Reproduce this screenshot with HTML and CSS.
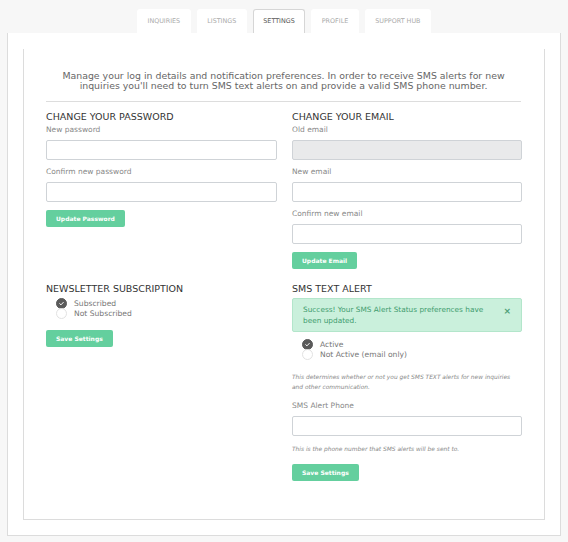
FILE: index.html
```html
<!DOCTYPE html>
<html>
<head>
<meta charset="utf-8">
<link rel="stylesheet" href="styles.css">
</head>
<body>
<nav class="tabs">
  <a class="tab">INQUIRIES</a>
  <a class="tab">LISTINGS</a>
  <a class="tab active">SETTINGS</a>
  <a class="tab">PROFILE</a>
  <a class="tab">SUPPORT HUB</a>
</nav>
<div class="outer">
  <div class="inner">
    <p class="intro">Manage your log in details and notification preferences. In order to receive SMS alerts for new inquiries you'll need to turn SMS text alerts on and provide a valid SMS phone number.</p>
    <div class="grid">
      <section class="col">
        <h3>CHANGE YOUR PASSWORD</h3>
        <label>New password</label>
        <input class="field" type="password">
        <label>Confirm new password</label>
        <input class="field" type="password">
        <button class="btn">Update Password</button>
      </section>
      <section class="col">
        <h3>CHANGE YOUR EMAIL</h3>
        <label>Old email</label>
        <input class="field disabled" type="text" disabled>
        <label>New email</label>
        <input class="field" type="text">
        <label>Confirm new email</label>
        <input class="field" type="text">
        <button class="btn">Update Email</button>
      </section>
      <section class="col">
        <h3 class="h-second">NEWSLETTER SUBSCRIPTION</h3>
        <div class="radios">
          <div class="radio"><span class="dot on"><svg viewBox="0 0 12 12" width="11" height="11"><path d="M3.6 6.2 L5.3 7.8 L8.4 4.5" fill="none" stroke="#fff" stroke-width="1.3" stroke-linecap="round" stroke-linejoin="round"/></svg></span>Subscribed</div>
          <div class="radio"><span class="dot"></span>Not Subscribed</div>
        </div>
        <button class="btn">Save Settings</button>
      </section>
      <section class="col">
        <h3 class="h-second">SMS TEXT ALERT</h3>
        <div class="alert"><span class="alert-text">Success! Your SMS Alert Status preferences have been updated.</span><span class="close">×</span></div>
        <div class="radios radios-sms">
          <div class="radio"><span class="dot on"><svg viewBox="0 0 12 12" width="11" height="11"><path d="M3.6 6.2 L5.3 7.8 L8.4 4.5" fill="none" stroke="#fff" stroke-width="1.3" stroke-linecap="round" stroke-linejoin="round"/></svg></span>Active</div>
          <div class="radio"><span class="dot"></span>Not Active (email only)</div>
        </div>
        <p class="hint">This determines whether or not you get SMS TEXT alerts for new inquiries and other communication.</p>
        <label>SMS Alert Phone</label>
        <input class="field" type="text">
        <p class="hint hint-2">This is the phone number that SMS alerts will be sent to.</p>
        <button class="btn">Save Settings</button>
      </section>
    </div>
  </div>
</div>
</body>
</html>
```

FILE: styles.css
```css
* { box-sizing: border-box; }
body {
  margin: 0;
  background: #f7f7f7;
  font-family: "DejaVu Sans", "Open Sans", sans-serif;
  color: #555;
}
.tabs {
  display: flex;
  justify-content: center;
  gap: 6px;
  padding-top: 9px;
  height: 33px;
}
.tab {
  background: #fff;
  border-radius: 3px 3px 0 0;
  height: 24px;
  padding: 0 10.5px;
  font-size: 6.4px;
  line-height: 24px;
  color: #aaa;
}
.tab.active {
  border: 1px solid #d6d6d6;
  border-bottom: none;
  color: #555;
  line-height: 22px;
  padding: 0 9.5px;
}
.outer {
  margin: 0 7px;
  background: #fff;
  border: 1px solid #dcdcdc;
  border-top: none;
  padding: 16px 15px 15px;
}
.inner {
  border: 1px solid #dcdcdc;
  border-top: none;
  padding: 22px 23px 38px 22px;
  height: 471px;
}
.intro {
  margin: 0;
  text-align: center;
  font-size: 9.4px;
  line-height: 10px;
  color: #666;
  padding: 0 0 10px;
  border-bottom: 1px solid #ddd;
}
.grid {
  display: grid;
  grid-template-columns: 231px 230px;
  column-gap: 15px;
}
.col { display: flex; flex-direction: column; align-items: flex-start; }
h3 {
  margin: 10px 0 0;
  font-size: 9.5px;
  font-weight: normal;
  color: #333;
  line-height: 10px;
}
.h-second { margin-top: 15px; }
label {
  font-size: 7.5px;
  color: #888;
  line-height: 10px;
  margin-top: 3px;
}
.field {
  width: 100%;
  height: 20px;
  border: 1px solid #cfd3d7;
  border-radius: 2px;
  background: #fff;
  margin: 5px 0 4px;
  padding: 0;
}
.field.disabled { background: #e9eaeb; }
.btn {
  background: #64cf9e;
  border: none;
  border-radius: 2px;
  color: #fff;
  font-family: inherit;
  font-weight: bold;
  font-size: 6px;
  height: 17px;
  padding: 0 10px;
  margin-top: 4px;
}
.radios { padding-left: 10px; margin: 4px 0 7px; }
.radios-sms { margin: 7px 0 12px; }
.radio {
  display: flex;
  align-items: center;
  font-size: 7.6px;
  color: #777;
  height: 10.5px;
}
.dot {
  width: 11px;
  height: 11px;
  border-radius: 50%;
  border: 1px solid #e2e2e2;
  background: #fff;
  margin-right: 7px;
  display: flex;
  align-items: center;
  justify-content: center;
}
.dot.on { background: #5a5a5a; border-color: #5a5a5a; }
.dot svg { display: block; }
.alert {
  width: 100%;
  margin-top: 4px;
  background: #caf0dc;
  border: 1px solid #b3e6cb;
  border-radius: 2px;
  padding: 5px 10px 5px 10px;
  display: flex;
  justify-content: space-between;
  color: #3f9c6e;
  font-size: 7.35px;
  line-height: 11px;
  height: 34px;
}
.alert-text { width: 190px; }
.close { font-weight: bold; font-size: 9px; margin-top: 2px; color: #4f9f78; }
.hint {
  margin: 0 0 6px;
  font-size: 5.9px;
  font-style: italic;
  color: #888;
  line-height: 10px;
}
.hint-2 { margin: 4px 0 6px; }
```
